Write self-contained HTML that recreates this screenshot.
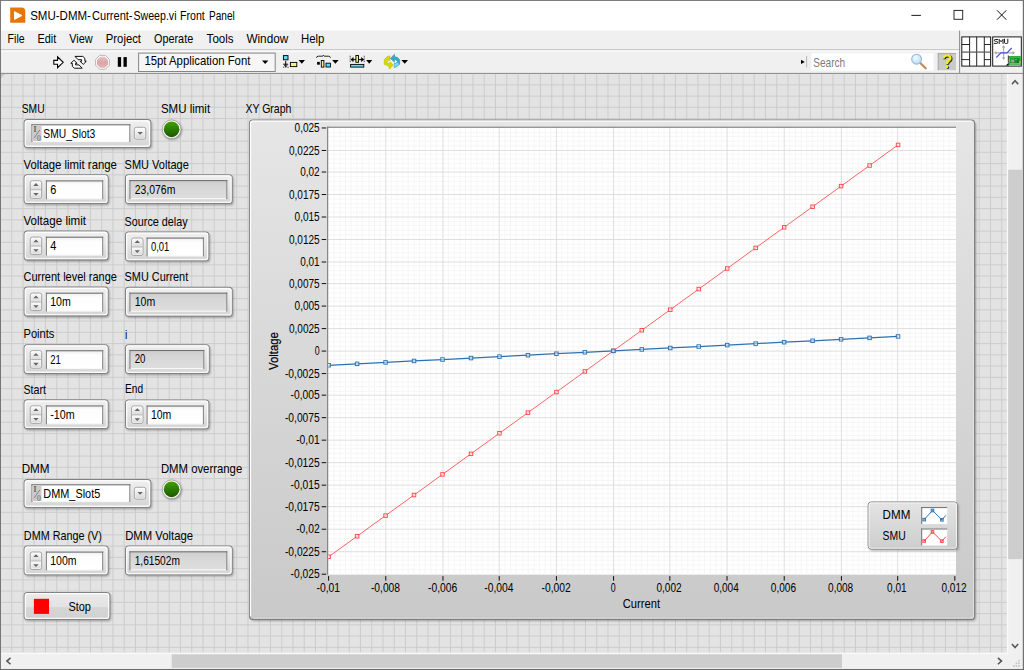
<!DOCTYPE html>
<html><head><meta charset="utf-8"><title>SMU-DMM-Current-Sweep.vi Front Panel</title>
<style>
html,body{margin:0;padding:0;background:#f0f0f0;overflow:hidden}
svg{display:block;font-family:"Liberation Sans",sans-serif}
text{white-space:pre}
</style></head><body>
<svg width="1024" height="670" viewBox="0 0 1024 670">
<defs>
<linearGradient id="gAbort" x1="0" y1="0" x2="0" y2="1"><stop offset="0" stop-color="#e9c3c3"/><stop offset="0.5" stop-color="#dca4a6"/><stop offset="1" stop-color="#e3b4b5"/></linearGradient>
<radialGradient id="gLens" cx="0.4" cy="0.35" r="0.7"><stop offset="0" stop-color="#f4fbff"/><stop offset="1" stop-color="#b6daf2"/></radialGradient>
<linearGradient id="gFrame" x1="0" y1="0" x2="0" y2="1"><stop offset="0" stop-color="#f0f0f0"/><stop offset="0.5" stop-color="#e4e4e4"/><stop offset="1" stop-color="#d4d4d4"/></linearGradient>
<linearGradient id="gField" x1="0" y1="0" x2="0" y2="1"><stop offset="0" stop-color="#eeeeee"/><stop offset="0.22" stop-color="#fdfdfd"/><stop offset="1" stop-color="#ffffff"/></linearGradient>
<linearGradient id="gInd" x1="0" y1="0" x2="0" y2="1"><stop offset="0" stop-color="#cdcdcd"/><stop offset="0.3" stop-color="#d6d6d6"/><stop offset="1" stop-color="#dedede"/></linearGradient>
<linearGradient id="gBtn" x1="0" y1="0" x2="0" y2="1"><stop offset="0" stop-color="#fcfcfc"/><stop offset="1" stop-color="#dadada"/></linearGradient>
<linearGradient id="gStop" x1="0" y1="0" x2="0" y2="1"><stop offset="0" stop-color="#ebebeb"/><stop offset="0.53" stop-color="#e3e3e3"/><stop offset="0.56" stop-color="#d6d6d6"/><stop offset="1" stop-color="#d1d1d1"/></linearGradient>
<linearGradient id="gLed" x1="0" y1="0" x2="0" y2="1"><stop offset="0" stop-color="#3fa300"/><stop offset="1" stop-color="#1b5800"/></linearGradient>
<filter id="fSh" x="-10%" y="-20%" width="125%" height="150%"><feGaussianBlur stdDeviation="0.9"/></filter>
<linearGradient id="gGraph" x1="0" y1="0" x2="0" y2="1"><stop offset="0" stop-color="#e6e6e6"/><stop offset="1" stop-color="#c9c9c9"/></linearGradient>
<linearGradient id="gLegend" x1="0" y1="0" x2="0" y2="1"><stop offset="0" stop-color="#e4e4e4"/><stop offset="1" stop-color="#cdcdcd"/></linearGradient>
<filter id="fShG" x="-5%" y="-5%" width="110%" height="112%"><feGaussianBlur stdDeviation="1.2"/></filter>
<clipPath id="cPlot"><rect x="328.2" y="127.7" width="627.8" height="446.9"/></clipPath>
</defs>
<rect x="0" y="0" width="1024" height="670" fill="#f0f0f0" />
<rect x="0" y="0" width="1024" height="30.6" fill="#ffffff" />
<path d="M10.2 7.5 H21.3 Q25.3 7.5 25.3 11.5 V22.7 H10.2 Z" fill="#e6760a"/>
<path d="M14.5 11.7 L22 15.5 L14.5 19.4 Z" fill="#ffffff" stroke="#ffffff" stroke-width="0.9" stroke-linejoin="round"/>
<text x="30.2" y="19.8" font-size="11.9" fill="#000" textLength="60.7" lengthAdjust="spacingAndGlyphs" >SMU-DMM-</text>
<text x="92.1" y="19.8" font-size="11.9" fill="#000" textLength="40.4" lengthAdjust="spacingAndGlyphs" >Current-</text>
<text x="133.5" y="19.8" font-size="11.9" fill="#000" textLength="43" lengthAdjust="spacingAndGlyphs" >Sweep.vi</text>
<text x="180" y="19.8" font-size="11.9" fill="#000" textLength="24.8" lengthAdjust="spacingAndGlyphs" >Front</text>
<text x="209" y="19.8" font-size="11.9" fill="#000" textLength="25.8" lengthAdjust="spacingAndGlyphs" >Panel</text>
<path d="M911.4 15.4 H920.9" stroke="#111" stroke-width="0.95" fill="none"/>
<rect x="954" y="10.4" width="8.7" height="8.9" fill="none" stroke="#222" stroke-width="0.95"/>
<path d="M997 10.3 L1006.3 19.7 M1006.3 10.3 L997 19.7" stroke="#111" stroke-width="1" fill="none"/>
<text x="7.6" y="42.7" font-size="12.1" fill="#000" textLength="17" lengthAdjust="spacingAndGlyphs" >File</text>
<text x="37.4" y="42.7" font-size="12.1" fill="#000" textLength="18.8" lengthAdjust="spacingAndGlyphs" >Edit</text>
<text x="69.2" y="42.7" font-size="12.1" fill="#000" textLength="23.4" lengthAdjust="spacingAndGlyphs" >View</text>
<text x="105.8" y="42.7" font-size="12.1" fill="#000" textLength="35.2" lengthAdjust="spacingAndGlyphs" >Project</text>
<text x="154" y="42.7" font-size="12.1" fill="#000" textLength="39.2" lengthAdjust="spacingAndGlyphs" >Operate</text>
<text x="206.6" y="42.7" font-size="12.1" fill="#000" textLength="27" lengthAdjust="spacingAndGlyphs" >Tools</text>
<text x="246.4" y="42.7" font-size="12.1" fill="#000" textLength="41.8" lengthAdjust="spacingAndGlyphs" >Window</text>
<text x="301" y="42.7" font-size="12.1" fill="#000" textLength="23.4" lengthAdjust="spacingAndGlyphs" >Help</text>
<rect x="0" y="49.25" width="959.2" height="1.05" fill="#bcbcbc" />
<rect x="0" y="50.3" width="959.2" height="1.4" fill="#fbfbfb" />
<path d="M53.8 60.4 H57.6 V56.9 L63.2 62.3 L57.6 67.7 V64.3 H53.8 Z" fill="#fff" stroke="#000" stroke-width="1.1" stroke-linejoin="miter"/>
<g fill="#fff" stroke="#000" stroke-width="0.95" stroke-linejoin="round"><path d="M75 56.4 H82.8 L84.9 58.4 V61.3 H86.3 L83.2 64.4 L80.2 61.3 H81.6 V59.7 H78.2 Z"/><path d="M82.2 68.2 H74.4 L72.3 66.2 V63.3 H70.9 L74 60.2 L77 63.3 H75.6 V64.9 H79 Z"/></g>
<polygon points="109.43 65.17 105.37 69.23 99.63 69.23 95.57 65.17 95.57 59.43 99.63 55.37 105.37 55.37 109.43 59.43" fill="#fafafa" stroke="#b9b9b9" stroke-width="1"/>
<polygon points="107.95 64.56 104.76 67.75 100.24 67.75 97.05 64.56 97.05 60.04 100.24 56.85 104.76 56.85 107.95 60.04" fill="url(#gAbort)"/>
<rect x="117.8" y="57.1" width="3.3" height="9.7" fill="#000" />
<rect x="123.5" y="57.1" width="3.3" height="9.7" fill="#000" />
<rect x="138.6" y="53.1" width="136.6" height="18.4" fill="#f6f6f6" stroke="#868686" stroke-width="1"/>
<text x="144.4" y="65.2" font-size="12.1" fill="#000" textLength="106" lengthAdjust="spacingAndGlyphs" >15pt Application Font</text>
<path d="M262 60.5 L268.4 60.5 L265.2 64 Z" fill="#000"/>
<rect x="283.4" y="55.6" width="4.6" height="4.2" fill="#5fdcf6" stroke="#000" stroke-width="0.9"/>
<path d="M285.7 60.8 V66.6 M283.2 64.2 H288.2 M284.3 65.2 L285.7 66.8 L287.1 65.2" stroke="#000" stroke-width="0.95" fill="none"/>
<path d="M283 67.2 H289" stroke="#000" stroke-width="0.8" stroke-dasharray="0.9 0.9"/>
<rect x="290.4" y="62.4" width="6.4" height="4.2" fill="#f6f282" stroke="#000" stroke-width="0.9"/>
<path d="M298.6 60.1 L305 60.1 L301.8 63.7 Z" fill="#000"/>
<path d="M316.4 57.8 Q316.6 56.2 318.4 56.2 H322 Q323.2 56.2 323.4 55.4 Q323.6 56.2 324.8 56.2 H328.4 Q330.2 56.2 330.4 57.8" stroke="#000" stroke-width="0.85" fill="none"/>
<rect x="317.1" y="61.9" width="2.7" height="2.8" fill="#000" />
<rect x="321.3" y="60.5" width="2.6" height="6.6" fill="#f6f282" stroke="#000" stroke-width="0.9"/>
<rect x="326" y="63.2" width="4.4" height="3.8" fill="#5fdcf6" stroke="#000" stroke-width="0.9"/>
<path d="M332.2 60.1 L338.6 60.1 L335.4 63.7 Z" fill="#000"/>
<path d="M350.2 55.8 V63 M364.2 55.8 V63" stroke="#000" stroke-width="0.9" stroke-dasharray="0.9 0.9"/>
<path d="M351 59.6 H363.6" stroke="#000" stroke-width="0.95"/>
<path d="M353.2 57.6 L351 59.6 L353.2 61.6 Z M361.4 57.6 L363.6 59.6 L361.4 61.6 Z" fill="#000" stroke="#000" stroke-width="0.6"/>
<rect x="355.9" y="55.5" width="2.6" height="6.8" fill="#f6f282" stroke="#000" stroke-width="0.9"/>
<rect x="350.6" y="64.4" width="13.2" height="2.7" fill="#5fdcf6" stroke="#000" stroke-width="0.9"/>
<path d="M366.2 60.1 L372.2 60.1 L369.2 63.7 Z" fill="#000"/>
<path d="M390 55.9 L387.2 56.5 L384.2 59.7 L384.2 64.3 L388.6 66.1 L389.5 69.2 L393.1 65 L390.2 61.8 L389.3 63.5 L386.8 62.5 L387.7 60.6 L390 60.3 Z" fill="#d8d800" stroke="#b4b400" stroke-width="0.5"/>
<path d="M390.4 58.4 L394.5 54.3 L394.5 56.6 L397.9 57.7 L399.7 59.9 L399.7 64.3 L396.8 66.5 L394.2 67.6 L394.2 63.6 L396.9 62 L396.9 61 L394.4 59.6 L394.4 62 Z" fill="#34acca" stroke="#1c7e9a" stroke-width="0.5"/>
<path d="M394.3 67.2 L394.3 64 L397.4 62.6 L399.3 64.2 L396.8 66.2 Z" fill="#74dcf2"/>
<path d="M395 59.9 L397.3 61.5 L395 63 Z" fill="#fbfbfb"/>
<path d="M401.4 60.1 L408 60.1 L404.7 63.8 Z" fill="#000"/>
<path d="M801 59.8 L804.8 61.9 L801 64 Z" fill="#000"/>
<rect x="806.2" y="55.8" width="0.9" height="11.6" fill="#b2b2b2" />
<rect x="811.4" y="53.2" width="122.2" height="17.5" fill="#ffffff" />
<text x="813.3" y="66.7" font-size="12.1" fill="#7c7c7c" textLength="31.8" lengthAdjust="spacingAndGlyphs" >Search</text>
<path d="M920.4 63 L925.8 68.2" stroke="#d08a48" stroke-width="2" stroke-linecap="round"/>
<path d="M920.6 64.4 L925.6 69" stroke="#9a9a9a" stroke-width="0.7" stroke-linecap="round"/>
<circle cx="916.6" cy="59.2" r="4.9" fill="url(#gLens)" stroke="#93bade" stroke-width="1.1"/>
<rect x="937.8" y="53.2" width="18.2" height="17" fill="#c9c9c9" />
<rect x="937.8" y="53.2" width="18.2" height="0.9" fill="#a5a5a5" />
<rect x="937.8" y="53.2" width="0.9" height="17" fill="#a5a5a5" />
<g transform="translate(0.8 0.7)"><path d="M943.7 58.5 Q943.8 55.5 947.3 55.5 Q950.5 55.5 950.5 58.2 Q950.5 59.9 948.6 61.1 Q947 62.2 947 64" fill="none" stroke="#1c1c1c" stroke-width="2.5"/><circle cx="947" cy="66.9" r="1.35" fill="#1c1c1c"/></g>
<path d="M943.7 58.5 Q943.8 55.5 947.3 55.5 Q950.5 55.5 950.5 58.2 Q950.5 59.9 948.6 61.1 Q947 62.2 947 64" fill="none" stroke="#f6f200" stroke-width="2.2"/><circle cx="947" cy="66.9" r="1.25" fill="#f6f200"/>
<rect x="0" y="72.9" width="1024" height="1" fill="#7d7d7d" />
<rect x="959.1" y="30.6" width="1" height="42.8" fill="#8a8a8a" />
<rect x="961.8" y="36.9" width="28.8" height="29.2" fill="#fff" stroke="#1a1a1a" stroke-width="1"/>
<path d="M969.6 36.9 V66.1 M976.7 36.9 V66.1 M984.3 36.9 V66.1" stroke="#1a1a1a" stroke-width="0.95"/>
<path d="M961.8 52.1 H990.6" stroke="#5c5c5c" stroke-width="1.25"/>
<path d="M961.8 44.5 H969.6 M984.3 44.5 H990.6 M961.8 59.6 H969.6 M984.3 59.6 H990.6" stroke="#1a1a1a" stroke-width="0.95"/>
<rect x="992.7" y="36.9" width="28.6" height="29.2" fill="#fff" stroke="#1a1a1a" stroke-width="1"/>
<g fill="none" stroke="#101010" stroke-width="0.95" stroke-linejoin="round" stroke-linecap="square"><path d="M997.6 39.5 H995.2 Q994.4 39.5 994.4 40.3 Q994.4 41.3 995.4 41.4 H996.7 Q997.7 41.5 997.7 42.5 Q997.7 43.4 996.8 43.4 H994.4"/><path d="M999.2 43.5 V39.4 L1001.1 41.8 L1003 39.4 V43.5"/><path d="M1004.5 39.3 V42.5 Q1004.5 43.4 1005.4 43.4 H1006.9 Q1007.8 43.4 1007.8 42.5 V39.3"/></g>
<path d="M1003.6 46.2 V58.9 M995 52.8 H1014" stroke="#adadad" stroke-width="1.15"/>
<path d="M1002.3 47.4 L1003.6 45.6 L1004.9 47.4 Z M1002.3 57.7 L1003.6 59.5 L1004.9 57.7 Z M996.2 51.5 L994.4 52.8 L996.2 54.1 Z M1012.8 51.5 L1014.6 52.8 L1012.8 54.1 Z" fill="#a4a4a4" stroke="#a4a4a4" stroke-width="0.5"/>
<path d="M996.3 57.5 L1000.9 52.9 H1007 L1011.7 48" stroke="#5252da" stroke-width="1.2" fill="none"/>
<rect x="1008.5" y="56.1" width="12.2" height="8.9" fill="#1f9a2e" />
<rect x="1009.6" y="56.6" width="10.6" height="1.6" fill="#35b840" />
<rect x="1014.6" y="58.4" width="4.4" height="4.6" fill="#178a26" />
<rect x="1015.4" y="59" width="1.2" height="1.2" fill="#52d85a" />
<rect x="1017.2" y="61.2" width="1.2" height="1.2" fill="#0c5c18" />
<rect x="1011" y="59.4" width="3.3" height="3.1" fill="#8c8c8c" />
<rect x="1011.6" y="60" width="2.1" height="1.9" fill="#a8a8a8" />
<rect x="1008.8" y="58.4" width="1.1" height="3.6" fill="#e0b040" />
<rect x="1019.2" y="60.9" width="1.3" height="2.5" fill="#e0b040" />
<rect x="1009.4" y="63.4" width="11" height="1.1" fill="#9ad49a" />
<path d="M1008.3 55.4 V62.4" stroke="#2c2c2c" stroke-width="0.9"/>
<path d="M1005.8 65.6 L1008.6 62.8 V65.6 Z" fill="#000"/>
<rect x="0.94" y="73.9" width="1005.96" height="578.9" fill="#e3e3e3" />
<path d="M11.72 73.9V652.8M22.97 73.9V652.8M34.22 73.9V652.8M45.47 73.9V652.8M56.72 73.9V652.8M67.97 73.9V652.8M79.22 73.9V652.8M90.47 73.9V652.8M101.72 73.9V652.8M112.97 73.9V652.8M124.22 73.9V652.8M135.47 73.9V652.8M146.72 73.9V652.8M157.97 73.9V652.8M169.22 73.9V652.8M180.47 73.9V652.8M191.72 73.9V652.8M202.97 73.9V652.8M214.22 73.9V652.8M225.47 73.9V652.8M236.72 73.9V652.8M247.97 73.9V652.8M259.22 73.9V652.8M270.47 73.9V652.8M281.72 73.9V652.8M292.97 73.9V652.8M304.22 73.9V652.8M315.47 73.9V652.8M326.72 73.9V652.8M337.97 73.9V652.8M349.22 73.9V652.8M360.47 73.9V652.8M371.72 73.9V652.8M382.97 73.9V652.8M394.22 73.9V652.8M405.47 73.9V652.8M416.72 73.9V652.8M427.97 73.9V652.8M439.22 73.9V652.8M450.47 73.9V652.8M461.72 73.9V652.8M472.97 73.9V652.8M484.22 73.9V652.8M495.47 73.9V652.8M506.72 73.9V652.8M517.97 73.9V652.8M529.22 73.9V652.8M540.47 73.9V652.8M551.72 73.9V652.8M562.97 73.9V652.8M574.22 73.9V652.8M585.47 73.9V652.8M596.72 73.9V652.8M607.97 73.9V652.8M619.22 73.9V652.8M630.47 73.9V652.8M641.72 73.9V652.8M652.97 73.9V652.8M664.22 73.9V652.8M675.47 73.9V652.8M686.72 73.9V652.8M697.97 73.9V652.8M709.22 73.9V652.8M720.47 73.9V652.8M731.72 73.9V652.8M742.97 73.9V652.8M754.22 73.9V652.8M765.47 73.9V652.8M776.72 73.9V652.8M787.97 73.9V652.8M799.22 73.9V652.8M810.47 73.9V652.8M821.72 73.9V652.8M832.97 73.9V652.8M844.22 73.9V652.8M855.47 73.9V652.8M866.72 73.9V652.8M877.97 73.9V652.8M889.22 73.9V652.8M900.47 73.9V652.8M911.72 73.9V652.8M922.97 73.9V652.8M934.22 73.9V652.8M945.47 73.9V652.8M956.72 73.9V652.8M967.97 73.9V652.8M979.22 73.9V652.8M990.47 73.9V652.8M1001.72 73.9V652.8M0.94 84.84H1006.9M0.94 96.09H1006.9M0.94 107.34H1006.9M0.94 118.59H1006.9M0.94 129.84H1006.9M0.94 141.09H1006.9M0.94 152.34H1006.9M0.94 163.59H1006.9M0.94 174.84H1006.9M0.94 186.09H1006.9M0.94 197.34H1006.9M0.94 208.59H1006.9M0.94 219.84H1006.9M0.94 231.09H1006.9M0.94 242.34H1006.9M0.94 253.59H1006.9M0.94 264.85H1006.9M0.94 276.1H1006.9M0.94 287.35H1006.9M0.94 298.6H1006.9M0.94 309.85H1006.9M0.94 321.1H1006.9M0.94 332.35H1006.9M0.94 343.6H1006.9M0.94 354.85H1006.9M0.94 366.1H1006.9M0.94 377.35H1006.9M0.94 388.6H1006.9M0.94 399.85H1006.9M0.94 411.1H1006.9M0.94 422.35H1006.9M0.94 433.6H1006.9M0.94 444.85H1006.9M0.94 456.1H1006.9M0.94 467.35H1006.9M0.94 478.6H1006.9M0.94 489.85H1006.9M0.94 501.1H1006.9M0.94 512.35H1006.9M0.94 523.6H1006.9M0.94 534.85H1006.9M0.94 546.1H1006.9M0.94 557.35H1006.9M0.94 568.6H1006.9M0.94 579.85H1006.9M0.94 591.1H1006.9M0.94 602.35H1006.9M0.94 613.6H1006.9M0.94 624.85H1006.9M0.94 636.1H1006.9M0.94 647.35H1006.9" stroke="#cbcbcb" stroke-width="0.94" fill="none"/>
<path d="M0.94 73.9 H5.2 L0.94 78.2 Z" fill="#c8c8c8"/>
<text x="21.7" y="113.2" font-size="12.4" fill="#000" textLength="22.9" lengthAdjust="spacingAndGlyphs" >SMU</text>
<rect x="24.95" y="120.8" width="127.2" height="28.4" rx="3.2" fill="#000" opacity="0.30" filter="url(#fSh)"/>
<rect x="24.15" y="119.6" width="126.6" height="27.8" rx="3.2" fill="url(#gFrame)" stroke="#828282" stroke-width="1.05"/>
<rect x="25.3" y="120.75" width="124.3" height="25.5" rx="2.2" fill="none" stroke="#fff" stroke-opacity="0.85" stroke-width="1.3"/>
<rect x="31.95" y="124.8" width="97.85" height="16.7" fill="#ffffff" />
<rect x="32.45" y="141" width="96.85" height="1.1" fill="#f8f8f8" />
<rect x="31.45" y="124.3" width="1" height="17.7" fill="#7c7c7c" />
<rect x="129.3" y="124.3" width="1" height="17.7" fill="#828282" />
<rect x="31.45" y="124.25" width="98.85" height="1.1" fill="#727272" />
<rect x="32.45" y="125.3" width="9.1" height="15.7" fill="#cacaca" />
<text x="33.45" y="132.4" font-size="7.6" fill="#606060" font-family="Liberation Serif" font-weight="bold">I</text>
<path d="M33.95 138.2 L39.75 130" stroke="#767676" stroke-width="0.85"/>
<text x="37.05" y="140.8" font-size="7.6" fill="#606060" font-family="Liberation Serif">0</text>
<text x="43.35" y="137.9" font-size="12.4" fill="#000" textLength="51.9" lengthAdjust="spacingAndGlyphs" >SMU_Slot3</text>
<rect x="134.3" y="127.3" width="11.5" height="11.8" rx="2.2" fill="#fff" stroke="#a0a0a0" stroke-width="0.95"/>
<rect x="135.2" y="128.2" width="9.7" height="10" rx="1.4" fill="url(#gBtn)"/>
<path d="M137.45 132 L142.85 132 L140.15 134.8 Z" fill="#666"/>
<text x="160.9" y="113.2" font-size="12.4" fill="#000" textLength="49.2" lengthAdjust="spacingAndGlyphs" >SMU limit</text>
<circle cx="172.3" cy="130.3" r="9.7" fill="#000" opacity="0.36" filter="url(#fSh)"/>
<circle cx="171.6" cy="129.3" r="9.3" fill="#fbfbfb" stroke="#9a9a9a" stroke-width="0.7"/>
<circle cx="171.6" cy="129.3" r="7.85" fill="url(#gLed)"/>
<text x="23.5" y="168.7" font-size="12.4" fill="#000" textLength="93.4" lengthAdjust="spacingAndGlyphs" >Voltage limit range</text>
<rect x="24.95" y="176" width="84.55" height="29.35" rx="3.2" fill="#000" opacity="0.30" filter="url(#fSh)"/>
<rect x="24.15" y="174.8" width="83.95" height="28.75" rx="3.2" fill="url(#gFrame)" stroke="#828282" stroke-width="1.05"/>
<rect x="25.3" y="175.95" width="81.65" height="26.45" rx="2.2" fill="none" stroke="#fff" stroke-opacity="0.85" stroke-width="1.3"/>
<rect x="30.25" y="180.8" width="11.4" height="17.5" rx="2" fill="#fff" stroke="#a0a0a0" stroke-width="0.95"/>
<rect x="31.15" y="181.7" width="9.6" height="7.65" rx="1.2" fill="url(#gBtn)"/>
<rect x="31.15" y="190.25" width="9.6" height="7.15" rx="1.2" fill="url(#gBtn)"/>
<path d="M30.75 189.75H41.15" stroke="#a6a6a6" stroke-width="0.9"/>
<path d="M33.25 185.9 L38.65 185.9 L35.95 183.1 Z" fill="#666"/>
<path d="M33.25 193 L38.65 193 L35.95 195.8 Z" fill="#666"/>
<rect x="46.4" y="180.9" width="56.3" height="17.8" fill="url(#gField)" />
<rect x="46.9" y="198.2" width="55.3" height="1.1" fill="#f8f8f8" />
<rect x="45.9" y="180.4" width="1" height="18.8" fill="#7c7c7c" />
<rect x="102.2" y="180.4" width="1" height="18.8" fill="#828282" />
<rect x="45.9" y="180.35" width="57.3" height="1.1" fill="#727272" />
<text x="50.2" y="193.9" font-size="12.4" fill="#000" textLength="6.1" lengthAdjust="spacingAndGlyphs" >6</text>
<text x="124.6" y="168.8" font-size="12.4" fill="#000" textLength="64.2" lengthAdjust="spacingAndGlyphs" >SMU Voltage</text>
<rect x="126.3" y="176" width="107.3" height="29.35" rx="3.2" fill="#000" opacity="0.30" filter="url(#fSh)"/>
<rect x="125.5" y="174.8" width="106.7" height="28.75" rx="3.2" fill="url(#gFrame)" stroke="#828282" stroke-width="1.05"/>
<rect x="126.65" y="175.95" width="104.4" height="26.45" rx="2.2" fill="none" stroke="#fff" stroke-opacity="0.85" stroke-width="1.3"/>
<rect x="129.9" y="180.6" width="96.9" height="18" fill="url(#gInd)" />
<rect x="130.4" y="198.1" width="95.9" height="1.1" fill="#f8f8f8" />
<rect x="129.4" y="180.1" width="1" height="19" fill="#7c7c7c" />
<rect x="226.3" y="180.1" width="1" height="19" fill="#828282" />
<rect x="129.4" y="180.05" width="97.9" height="1.1" fill="#727272" />
<text x="134.7" y="193.55" font-size="12.4" fill="#000" textLength="40.7" lengthAdjust="spacingAndGlyphs" >23,076m</text>
<text x="23.5" y="224.85" font-size="12.4" fill="#000" textLength="62.5" lengthAdjust="spacingAndGlyphs" >Voltage limit</text>
<rect x="24.95" y="232.3" width="84.55" height="29.35" rx="3.2" fill="#000" opacity="0.30" filter="url(#fSh)"/>
<rect x="24.15" y="231.1" width="83.95" height="28.75" rx="3.2" fill="url(#gFrame)" stroke="#828282" stroke-width="1.05"/>
<rect x="25.3" y="232.25" width="81.65" height="26.45" rx="2.2" fill="none" stroke="#fff" stroke-opacity="0.85" stroke-width="1.3"/>
<rect x="30.25" y="237.1" width="11.4" height="17.5" rx="2" fill="#fff" stroke="#a0a0a0" stroke-width="0.95"/>
<rect x="31.15" y="238" width="9.6" height="7.65" rx="1.2" fill="url(#gBtn)"/>
<rect x="31.15" y="246.55" width="9.6" height="7.15" rx="1.2" fill="url(#gBtn)"/>
<path d="M30.75 246.05H41.15" stroke="#a6a6a6" stroke-width="0.9"/>
<path d="M33.25 242.2 L38.65 242.2 L35.95 239.4 Z" fill="#666"/>
<path d="M33.25 249.3 L38.65 249.3 L35.95 252.1 Z" fill="#666"/>
<rect x="46.4" y="237.2" width="56.3" height="17.8" fill="url(#gField)" />
<rect x="46.9" y="254.5" width="55.3" height="1.1" fill="#f8f8f8" />
<rect x="45.9" y="236.7" width="1" height="18.8" fill="#7c7c7c" />
<rect x="102.2" y="236.7" width="1" height="18.8" fill="#828282" />
<rect x="45.9" y="236.65" width="57.3" height="1.1" fill="#727272" />
<text x="50.2" y="250.2" font-size="12.4" fill="#000" textLength="6.1" lengthAdjust="spacingAndGlyphs" >4</text>
<text x="124.6" y="225.7" font-size="12.4" fill="#000" textLength="63" lengthAdjust="spacingAndGlyphs" >Source delay</text>
<rect x="126.3" y="233.2" width="83.9" height="29.35" rx="3.2" fill="#000" opacity="0.30" filter="url(#fSh)"/>
<rect x="125.5" y="232" width="83.3" height="28.75" rx="3.2" fill="url(#gFrame)" stroke="#828282" stroke-width="1.05"/>
<rect x="126.65" y="233.15" width="81" height="26.45" rx="2.2" fill="none" stroke="#fff" stroke-opacity="0.85" stroke-width="1.3"/>
<rect x="131.6" y="238" width="11.4" height="17.5" rx="2" fill="#fff" stroke="#a0a0a0" stroke-width="0.95"/>
<rect x="132.5" y="238.9" width="9.6" height="7.65" rx="1.2" fill="url(#gBtn)"/>
<rect x="132.5" y="247.45" width="9.6" height="7.15" rx="1.2" fill="url(#gBtn)"/>
<path d="M132.1 246.95H142.5" stroke="#a6a6a6" stroke-width="0.9"/>
<path d="M134.6 243.1 L140 243.1 L137.3 240.3 Z" fill="#666"/>
<path d="M134.6 250.2 L140 250.2 L137.3 253 Z" fill="#666"/>
<rect x="147.1" y="238.1" width="56.3" height="17.8" fill="url(#gField)" />
<rect x="147.6" y="255.4" width="55.3" height="1.1" fill="#f8f8f8" />
<rect x="146.6" y="237.6" width="1" height="18.8" fill="#7c7c7c" />
<rect x="202.9" y="237.6" width="1" height="18.8" fill="#828282" />
<rect x="146.6" y="237.55" width="57.3" height="1.1" fill="#727272" />
<text x="150.9" y="251.1" font-size="12.4" fill="#000" textLength="18.4" lengthAdjust="spacingAndGlyphs" >0,01</text>
<text x="23.5" y="281.1" font-size="12.4" fill="#000" textLength="93.4" lengthAdjust="spacingAndGlyphs" >Current level range</text>
<rect x="24.95" y="288.3" width="84.55" height="29.35" rx="3.2" fill="#000" opacity="0.30" filter="url(#fSh)"/>
<rect x="24.15" y="287.1" width="83.95" height="28.75" rx="3.2" fill="url(#gFrame)" stroke="#828282" stroke-width="1.05"/>
<rect x="25.3" y="288.25" width="81.65" height="26.45" rx="2.2" fill="none" stroke="#fff" stroke-opacity="0.85" stroke-width="1.3"/>
<rect x="30.25" y="293.1" width="11.4" height="17.5" rx="2" fill="#fff" stroke="#a0a0a0" stroke-width="0.95"/>
<rect x="31.15" y="294" width="9.6" height="7.65" rx="1.2" fill="url(#gBtn)"/>
<rect x="31.15" y="302.55" width="9.6" height="7.15" rx="1.2" fill="url(#gBtn)"/>
<path d="M30.75 302.05H41.15" stroke="#a6a6a6" stroke-width="0.9"/>
<path d="M33.25 298.2 L38.65 298.2 L35.95 295.4 Z" fill="#666"/>
<path d="M33.25 305.3 L38.65 305.3 L35.95 308.1 Z" fill="#666"/>
<rect x="46.4" y="293.2" width="56.3" height="17.8" fill="url(#gField)" />
<rect x="46.9" y="310.5" width="55.3" height="1.1" fill="#f8f8f8" />
<rect x="45.9" y="292.7" width="1" height="18.8" fill="#7c7c7c" />
<rect x="102.2" y="292.7" width="1" height="18.8" fill="#828282" />
<rect x="45.9" y="292.65" width="57.3" height="1.1" fill="#727272" />
<text x="50.2" y="306.2" font-size="12.4" fill="#000" textLength="20.6" lengthAdjust="spacingAndGlyphs" >10m</text>
<text x="124.6" y="280.85" font-size="12.4" fill="#000" textLength="63.6" lengthAdjust="spacingAndGlyphs" >SMU Current</text>
<rect x="126.3" y="288.55" width="107.3" height="29.35" rx="3.2" fill="#000" opacity="0.30" filter="url(#fSh)"/>
<rect x="125.5" y="287.35" width="106.7" height="28.75" rx="3.2" fill="url(#gFrame)" stroke="#828282" stroke-width="1.05"/>
<rect x="126.65" y="288.5" width="104.4" height="26.45" rx="2.2" fill="none" stroke="#fff" stroke-opacity="0.85" stroke-width="1.3"/>
<rect x="129.9" y="293.15" width="96.9" height="18" fill="url(#gInd)" />
<rect x="130.4" y="310.65" width="95.9" height="1.1" fill="#f8f8f8" />
<rect x="129.4" y="292.65" width="1" height="19" fill="#7c7c7c" />
<rect x="226.3" y="292.65" width="1" height="19" fill="#828282" />
<rect x="129.4" y="292.6" width="97.9" height="1.1" fill="#727272" />
<text x="134.7" y="306.1" font-size="12.4" fill="#000" textLength="20.5" lengthAdjust="spacingAndGlyphs" >10m</text>
<text x="23.5" y="338.1" font-size="12.4" fill="#000" textLength="30.9" lengthAdjust="spacingAndGlyphs" >Points</text>
<rect x="24.95" y="345.85" width="84.55" height="29.35" rx="3.2" fill="#000" opacity="0.30" filter="url(#fSh)"/>
<rect x="24.15" y="344.65" width="83.95" height="28.75" rx="3.2" fill="url(#gFrame)" stroke="#828282" stroke-width="1.05"/>
<rect x="25.3" y="345.8" width="81.65" height="26.45" rx="2.2" fill="none" stroke="#fff" stroke-opacity="0.85" stroke-width="1.3"/>
<rect x="30.25" y="350.65" width="11.4" height="17.5" rx="2" fill="#fff" stroke="#a0a0a0" stroke-width="0.95"/>
<rect x="31.15" y="351.55" width="9.6" height="7.65" rx="1.2" fill="url(#gBtn)"/>
<rect x="31.15" y="360.1" width="9.6" height="7.15" rx="1.2" fill="url(#gBtn)"/>
<path d="M30.75 359.6H41.15" stroke="#a6a6a6" stroke-width="0.9"/>
<path d="M33.25 355.75 L38.65 355.75 L35.95 352.95 Z" fill="#666"/>
<path d="M33.25 362.85 L38.65 362.85 L35.95 365.65 Z" fill="#666"/>
<rect x="46.4" y="350.75" width="56.3" height="17.8" fill="url(#gField)" />
<rect x="46.9" y="368.05" width="55.3" height="1.1" fill="#f8f8f8" />
<rect x="45.9" y="350.25" width="1" height="18.8" fill="#7c7c7c" />
<rect x="102.2" y="350.25" width="1" height="18.8" fill="#828282" />
<rect x="45.9" y="350.2" width="57.3" height="1.1" fill="#727272" />
<text x="50.2" y="363.75" font-size="12.4" fill="#000" textLength="10.6" lengthAdjust="spacingAndGlyphs" >21</text>
<text x="125" y="338.85" font-size="12.4" fill="#000" textLength="2.3" lengthAdjust="spacingAndGlyphs" >i</text>
<rect x="126.3" y="345.9" width="84.3" height="29.35" rx="3.2" fill="#000" opacity="0.30" filter="url(#fSh)"/>
<rect x="125.5" y="344.7" width="83.7" height="28.75" rx="3.2" fill="url(#gFrame)" stroke="#828282" stroke-width="1.05"/>
<rect x="126.65" y="345.85" width="81.4" height="26.45" rx="2.2" fill="none" stroke="#fff" stroke-opacity="0.85" stroke-width="1.3"/>
<rect x="129.9" y="350.5" width="73.9" height="18" fill="url(#gInd)" />
<rect x="130.4" y="368" width="72.9" height="1.1" fill="#f8f8f8" />
<rect x="129.4" y="350" width="1" height="19" fill="#7c7c7c" />
<rect x="203.3" y="350" width="1" height="19" fill="#828282" />
<rect x="129.4" y="349.95" width="74.9" height="1.1" fill="#727272" />
<text x="134.7" y="363.45" font-size="12.4" fill="#000" textLength="10.7" lengthAdjust="spacingAndGlyphs" >20</text>
<text x="23.5" y="393.6" font-size="12.4" fill="#000" textLength="22.5" lengthAdjust="spacingAndGlyphs" >Start</text>
<rect x="24.95" y="401.05" width="84.55" height="29.35" rx="3.2" fill="#000" opacity="0.30" filter="url(#fSh)"/>
<rect x="24.15" y="399.85" width="83.95" height="28.75" rx="3.2" fill="url(#gFrame)" stroke="#828282" stroke-width="1.05"/>
<rect x="25.3" y="401" width="81.65" height="26.45" rx="2.2" fill="none" stroke="#fff" stroke-opacity="0.85" stroke-width="1.3"/>
<rect x="30.25" y="405.85" width="11.4" height="17.5" rx="2" fill="#fff" stroke="#a0a0a0" stroke-width="0.95"/>
<rect x="31.15" y="406.75" width="9.6" height="7.65" rx="1.2" fill="url(#gBtn)"/>
<rect x="31.15" y="415.3" width="9.6" height="7.15" rx="1.2" fill="url(#gBtn)"/>
<path d="M30.75 414.8H41.15" stroke="#a6a6a6" stroke-width="0.9"/>
<path d="M33.25 410.95 L38.65 410.95 L35.95 408.15 Z" fill="#666"/>
<path d="M33.25 418.05 L38.65 418.05 L35.95 420.85 Z" fill="#666"/>
<rect x="46.4" y="405.95" width="56.3" height="17.8" fill="url(#gField)" />
<rect x="46.9" y="423.25" width="55.3" height="1.1" fill="#f8f8f8" />
<rect x="45.9" y="405.45" width="1" height="18.8" fill="#7c7c7c" />
<rect x="102.2" y="405.45" width="1" height="18.8" fill="#828282" />
<rect x="45.9" y="405.4" width="57.3" height="1.1" fill="#727272" />
<text x="50.2" y="418.95" font-size="12.4" fill="#000" textLength="24.4" lengthAdjust="spacingAndGlyphs" >-10m</text>
<text x="125" y="393.4" font-size="12.4" fill="#000" textLength="18.1" lengthAdjust="spacingAndGlyphs" >End</text>
<rect x="126.3" y="401.15" width="83.9" height="29.35" rx="3.2" fill="#000" opacity="0.30" filter="url(#fSh)"/>
<rect x="125.5" y="399.95" width="83.3" height="28.75" rx="3.2" fill="url(#gFrame)" stroke="#828282" stroke-width="1.05"/>
<rect x="126.65" y="401.1" width="81" height="26.45" rx="2.2" fill="none" stroke="#fff" stroke-opacity="0.85" stroke-width="1.3"/>
<rect x="131.6" y="405.95" width="11.4" height="17.5" rx="2" fill="#fff" stroke="#a0a0a0" stroke-width="0.95"/>
<rect x="132.5" y="406.85" width="9.6" height="7.65" rx="1.2" fill="url(#gBtn)"/>
<rect x="132.5" y="415.4" width="9.6" height="7.15" rx="1.2" fill="url(#gBtn)"/>
<path d="M132.1 414.9H142.5" stroke="#a6a6a6" stroke-width="0.9"/>
<path d="M134.6 411.05 L140 411.05 L137.3 408.25 Z" fill="#666"/>
<path d="M134.6 418.15 L140 418.15 L137.3 420.95 Z" fill="#666"/>
<rect x="147.1" y="406.05" width="56.3" height="17.8" fill="url(#gField)" />
<rect x="147.6" y="423.35" width="55.3" height="1.1" fill="#f8f8f8" />
<rect x="146.6" y="405.55" width="1" height="18.8" fill="#7c7c7c" />
<rect x="202.9" y="405.55" width="1" height="18.8" fill="#828282" />
<rect x="146.6" y="405.5" width="57.3" height="1.1" fill="#727272" />
<text x="150.9" y="419.05" font-size="12.4" fill="#000" textLength="20.4" lengthAdjust="spacingAndGlyphs" >10m</text>
<text x="21.7" y="473.2" font-size="12.4" fill="#000" textLength="27.9" lengthAdjust="spacingAndGlyphs" >DMM</text>
<rect x="24.95" y="480.8" width="127.2" height="28.4" rx="3.2" fill="#000" opacity="0.30" filter="url(#fSh)"/>
<rect x="24.15" y="479.6" width="126.6" height="27.8" rx="3.2" fill="url(#gFrame)" stroke="#828282" stroke-width="1.05"/>
<rect x="25.3" y="480.75" width="124.3" height="25.5" rx="2.2" fill="none" stroke="#fff" stroke-opacity="0.85" stroke-width="1.3"/>
<rect x="31.95" y="484.8" width="97.85" height="16.7" fill="#ffffff" />
<rect x="32.45" y="501" width="96.85" height="1.1" fill="#f8f8f8" />
<rect x="31.45" y="484.3" width="1" height="17.7" fill="#7c7c7c" />
<rect x="129.3" y="484.3" width="1" height="17.7" fill="#828282" />
<rect x="31.45" y="484.25" width="98.85" height="1.1" fill="#727272" />
<rect x="32.45" y="485.3" width="9.1" height="15.7" fill="#cacaca" />
<text x="33.45" y="492.4" font-size="7.6" fill="#606060" font-family="Liberation Serif" font-weight="bold">I</text>
<path d="M33.95 498.2 L39.75 490" stroke="#767676" stroke-width="0.85"/>
<text x="37.05" y="500.8" font-size="7.6" fill="#606060" font-family="Liberation Serif">0</text>
<text x="43.35" y="497.9" font-size="12.4" fill="#000" textLength="56.9" lengthAdjust="spacingAndGlyphs" >DMM_Slot5</text>
<rect x="134.3" y="487.3" width="11.5" height="11.8" rx="2.2" fill="#fff" stroke="#a0a0a0" stroke-width="0.95"/>
<rect x="135.2" y="488.2" width="9.7" height="10" rx="1.4" fill="url(#gBtn)"/>
<path d="M137.45 492 L142.85 492 L140.15 494.8 Z" fill="#666"/>
<text x="160.9" y="473.2" font-size="12.4" fill="#000" textLength="81.3" lengthAdjust="spacingAndGlyphs" >DMM overrange</text>
<circle cx="172.3" cy="490.3" r="9.7" fill="#000" opacity="0.36" filter="url(#fSh)"/>
<circle cx="171.6" cy="489.3" r="9.3" fill="#fbfbfb" stroke="#9a9a9a" stroke-width="0.7"/>
<circle cx="171.6" cy="489.3" r="7.85" fill="url(#gLed)"/>
<text x="23.85" y="539.7" font-size="12.4" fill="#000" textLength="78.05" lengthAdjust="spacingAndGlyphs" >DMM Range (V)</text>
<rect x="24.95" y="547.2" width="84.55" height="29.35" rx="3.2" fill="#000" opacity="0.30" filter="url(#fSh)"/>
<rect x="24.15" y="546" width="83.95" height="28.75" rx="3.2" fill="url(#gFrame)" stroke="#828282" stroke-width="1.05"/>
<rect x="25.3" y="547.15" width="81.65" height="26.45" rx="2.2" fill="none" stroke="#fff" stroke-opacity="0.85" stroke-width="1.3"/>
<rect x="30.25" y="552" width="11.4" height="17.5" rx="2" fill="#fff" stroke="#a0a0a0" stroke-width="0.95"/>
<rect x="31.15" y="552.9" width="9.6" height="7.65" rx="1.2" fill="url(#gBtn)"/>
<rect x="31.15" y="561.45" width="9.6" height="7.15" rx="1.2" fill="url(#gBtn)"/>
<path d="M30.75 560.95H41.15" stroke="#a6a6a6" stroke-width="0.9"/>
<path d="M33.25 557.1 L38.65 557.1 L35.95 554.3 Z" fill="#666"/>
<path d="M33.25 564.2 L38.65 564.2 L35.95 567 Z" fill="#666"/>
<rect x="46.4" y="552.1" width="56.3" height="17.8" fill="url(#gField)" />
<rect x="46.9" y="569.4" width="55.3" height="1.1" fill="#f8f8f8" />
<rect x="45.9" y="551.6" width="1" height="18.8" fill="#7c7c7c" />
<rect x="102.2" y="551.6" width="1" height="18.8" fill="#828282" />
<rect x="45.9" y="551.55" width="57.3" height="1.1" fill="#727272" />
<text x="50.2" y="565.1" font-size="12.4" fill="#000" textLength="26.3" lengthAdjust="spacingAndGlyphs" >100m</text>
<text x="125.2" y="539.7" font-size="12.4" fill="#000" textLength="67.8" lengthAdjust="spacingAndGlyphs" >DMM Voltage</text>
<rect x="126.3" y="547.2" width="107.3" height="29.35" rx="3.2" fill="#000" opacity="0.30" filter="url(#fSh)"/>
<rect x="125.5" y="546" width="106.7" height="28.75" rx="3.2" fill="url(#gFrame)" stroke="#828282" stroke-width="1.05"/>
<rect x="126.65" y="547.15" width="104.4" height="26.45" rx="2.2" fill="none" stroke="#fff" stroke-opacity="0.85" stroke-width="1.3"/>
<rect x="129.9" y="551.8" width="96.9" height="18" fill="url(#gInd)" />
<rect x="130.4" y="569.3" width="95.9" height="1.1" fill="#f8f8f8" />
<rect x="129.4" y="551.3" width="1" height="19" fill="#7c7c7c" />
<rect x="226.3" y="551.3" width="1" height="19" fill="#828282" />
<rect x="129.4" y="551.25" width="97.9" height="1.1" fill="#727272" />
<text x="134.7" y="564.75" font-size="12.4" fill="#000" textLength="45.2" lengthAdjust="spacingAndGlyphs" >1,61502m</text>
<rect x="24.95" y="593.65" width="86.25" height="27.65" rx="3.2" fill="#000" opacity="0.30" filter="url(#fSh)"/>
<rect x="24.15" y="592.45" width="85.65" height="27.05" rx="3.2" fill="url(#gStop)" stroke="#828282" stroke-width="1.05"/>
<rect x="25.3" y="593.6" width="83.35" height="24.75" rx="2.2" fill="none" stroke="#fff" stroke-opacity="0.85" stroke-width="1.3"/>
<rect x="33.9" y="598.8" width="15.1" height="15.1" fill="#ff0000" />
<text x="68.4" y="610.7" font-size="12.4" fill="#000" textLength="22.6" lengthAdjust="spacingAndGlyphs" >Stop</text>
<text x="245.4" y="112.9" font-size="12.4" fill="#000" textLength="46" lengthAdjust="spacingAndGlyphs" >XY Graph</text>
<rect x="250.9" y="121.8" width="725.1" height="499.3" rx="3.5" fill="#000" opacity="0.3" filter="url(#fShG)"/>
<rect x="249.5" y="120" width="725.1" height="499.3" rx="3.4" fill="url(#gGraph)" stroke="#7e7e7e" stroke-width="1.15"/>
<path d="M250.5 616.3 V123.5 Q250.5 121 253 121 H971.6" stroke="#fff" stroke-opacity="0.95" stroke-width="1.25" fill="none"/>
<path d="M973.5 124 V615.8 Q973.5 618.2 971.1 618.2 H253.5" stroke="#e6e6e6" stroke-opacity="0.75" stroke-width="1.1" fill="none"/>
<rect x="327.2" y="126.7" width="628.8" height="447.9" fill="#ffffff" />
<path d="M334.22 127.7V574.6M339.84 127.7V574.6M345.47 127.7V574.6M351.09 127.7V574.6M356.72 127.7V574.6M362.34 127.7V574.6M368.91 127.7V574.6M374.53 127.7V574.6M380.16 127.7V574.6M391.41 127.7V574.6M397.03 127.7V574.6M402.66 127.7V574.6M408.28 127.7V574.6M413.91 127.7V574.6M419.53 127.7V574.6M425.16 127.7V574.6M430.78 127.7V574.6M436.41 127.7V574.6M448.59 127.7V574.6M454.22 127.7V574.6M459.84 127.7V574.6M465.47 127.7V574.6M471.09 127.7V574.6M476.72 127.7V574.6M482.34 127.7V574.6M487.97 127.7V574.6M493.59 127.7V574.6M504.84 127.7V574.6M510.47 127.7V574.6M516.09 127.7V574.6M522.66 127.7V574.6M528.28 127.7V574.6M533.91 127.7V574.6M539.53 127.7V574.6M545.16 127.7V574.6M550.78 127.7V574.6M562.03 127.7V574.6M567.66 127.7V574.6M573.28 127.7V574.6M578.91 127.7V574.6M584.53 127.7V574.6M590.16 127.7V574.6M595.78 127.7V574.6M602.34 127.7V574.6M607.97 127.7V574.6M619.22 127.7V574.6M624.84 127.7V574.6M630.47 127.7V574.6M636.09 127.7V574.6M641.72 127.7V574.6M647.34 127.7V574.6M652.97 127.7V574.6M658.59 127.7V574.6M664.22 127.7V574.6M676.41 127.7V574.6M682.03 127.7V574.6M687.66 127.7V574.6M693.28 127.7V574.6M698.91 127.7V574.6M704.53 127.7V574.6M710.16 127.7V574.6M715.78 127.7V574.6M721.41 127.7V574.6M732.66 127.7V574.6M738.28 127.7V574.6M743.91 127.7V574.6M749.53 127.7V574.6M756.09 127.7V574.6M761.72 127.7V574.6M767.34 127.7V574.6M772.97 127.7V574.6M778.59 127.7V574.6M789.84 127.7V574.6M795.47 127.7V574.6M801.09 127.7V574.6M806.72 127.7V574.6M812.34 127.7V574.6M817.97 127.7V574.6M823.59 127.7V574.6M830.16 127.7V574.6M835.78 127.7V574.6M847.03 127.7V574.6M852.66 127.7V574.6M858.28 127.7V574.6M863.91 127.7V574.6M869.53 127.7V574.6M875.16 127.7V574.6M880.78 127.7V574.6M886.41 127.7V574.6M892.03 127.7V574.6M903.28 127.7V574.6M909.84 127.7V574.6M915.47 127.7V574.6M921.09 127.7V574.6M926.72 127.7V574.6M932.34 127.7V574.6M937.97 127.7V574.6M943.59 127.7V574.6M949.22 127.7V574.6M328.2 132.66H956M328.2 136.41H956M328.2 141.09H956M328.2 145.78H956M328.2 154.22H956M328.2 158.91H956M328.2 163.59H956M328.2 168.28H956M328.2 176.72H956M328.2 181.41H956M328.2 186.09H956M328.2 189.84H956M328.2 199.22H956M328.2 203.91H956M328.2 207.66H956M328.2 212.34H956M328.2 221.72H956M328.2 225.47H956M328.2 230.16H956M328.2 234.84H956M328.2 244.22H956M328.2 247.97H956M328.2 252.66H956M328.2 257.34H956M328.2 265.78H956M328.2 270.47H956M328.2 275.16H956M328.2 279.84H956M328.2 288.28H956M328.2 292.97H956M328.2 297.66H956M328.2 301.41H956M328.2 310.78H956M328.2 315.47H956M328.2 319.22H956M328.2 323.91H956M328.2 333.28H956M328.2 337.03H956M328.2 341.72H956M328.2 346.41H956M328.2 355.78H956M328.2 359.53H956M328.2 364.22H956M328.2 368.91H956M328.2 377.34H956M328.2 382.03H956M328.2 386.72H956M328.2 391.41H956M328.2 399.84H956M328.2 404.53H956M328.2 409.22H956M328.2 412.97H956M328.2 422.34H956M328.2 427.03H956M328.2 430.78H956M328.2 435.47H956M328.2 444.84H956M328.2 448.59H956M328.2 453.28H956M328.2 457.97H956M328.2 466.41H956M328.2 471.09H956M328.2 475.78H956M328.2 480.47H956M328.2 488.91H956M328.2 493.59H956M328.2 498.28H956M328.2 502.97H956M328.2 511.41H956M328.2 516.09H956M328.2 520.78H956M328.2 524.53H956M328.2 533.91H956M328.2 538.59H956M328.2 542.34H956M328.2 547.03H956M328.2 556.41H956M328.2 560.16H956M328.2 564.84H956M328.2 569.53H956" stroke="#f5f5f5" stroke-width="0.94" fill="none"/>
<path d="M385.78 127.7V574.6M442.97 127.7V574.6M499.22 127.7V574.6M556.41 127.7V574.6M613.59 127.7V574.6M669.84 127.7V574.6M727.03 127.7V574.6M784.22 127.7V574.6M841.41 127.7V574.6M897.66 127.7V574.6M328.2 150.47H956M328.2 172.03H956M328.2 194.53H956M328.2 217.03H956M328.2 239.53H956M328.2 262.03H956M328.2 283.59H956M328.2 306.09H956M328.2 328.59H956M328.2 351.09H956M328.2 373.59H956M328.2 395.16H956M328.2 417.66H956M328.2 440.16H956M328.2 462.66H956M328.2 485.16H956M328.2 506.72H956M328.2 529.22H956M328.2 551.72H956" stroke="#dddddd" stroke-width="0.94" fill="none"/>
<rect x="327.2" y="126.7" width="628.8" height="1" fill="#6c6c6c" />
<rect x="327.2" y="126.7" width="1" height="447.9" fill="#6c6c6c" />
<path d="M321.7 127.97H326.2" stroke="#000" stroke-width="0.94"/>
<text x="294.6" y="132.17" font-size="12.2" fill="#000" textLength="25.1" lengthAdjust="spacingAndGlyphs" >0,025</text>
<path d="M321.7 150.47H326.2" stroke="#000" stroke-width="0.94"/>
<text x="289" y="154.67" font-size="12.2" fill="#000" textLength="30.7" lengthAdjust="spacingAndGlyphs" >0,0225</text>
<path d="M321.7 172.03H326.2" stroke="#000" stroke-width="0.94"/>
<text x="300.2" y="176.23" font-size="12.2" fill="#000" textLength="19.5" lengthAdjust="spacingAndGlyphs" >0,02</text>
<path d="M321.7 194.53H326.2" stroke="#000" stroke-width="0.94"/>
<text x="289" y="198.73" font-size="12.2" fill="#000" textLength="30.7" lengthAdjust="spacingAndGlyphs" >0,0175</text>
<path d="M321.7 217.03H326.2" stroke="#000" stroke-width="0.94"/>
<text x="294.6" y="221.23" font-size="12.2" fill="#000" textLength="25.1" lengthAdjust="spacingAndGlyphs" >0,015</text>
<path d="M321.7 239.53H326.2" stroke="#000" stroke-width="0.94"/>
<text x="289" y="243.73" font-size="12.2" fill="#000" textLength="30.7" lengthAdjust="spacingAndGlyphs" >0,0125</text>
<path d="M321.7 262.03H326.2" stroke="#000" stroke-width="0.94"/>
<text x="300.2" y="266.23" font-size="12.2" fill="#000" textLength="19.5" lengthAdjust="spacingAndGlyphs" >0,01</text>
<path d="M321.7 283.59H326.2" stroke="#000" stroke-width="0.94"/>
<text x="289" y="287.79" font-size="12.2" fill="#000" textLength="30.7" lengthAdjust="spacingAndGlyphs" >0,0075</text>
<path d="M321.7 306.09H326.2" stroke="#000" stroke-width="0.94"/>
<text x="294.6" y="310.29" font-size="12.2" fill="#000" textLength="25.1" lengthAdjust="spacingAndGlyphs" >0,005</text>
<path d="M321.7 328.59H326.2" stroke="#000" stroke-width="0.94"/>
<text x="289" y="332.79" font-size="12.2" fill="#000" textLength="30.7" lengthAdjust="spacingAndGlyphs" >0,0025</text>
<path d="M321.7 351.09H326.2" stroke="#000" stroke-width="0.94"/>
<text x="314.8" y="355.29" font-size="12.2" fill="#000" textLength="4.9" lengthAdjust="spacingAndGlyphs" >0</text>
<path d="M321.7 373.59H326.2" stroke="#000" stroke-width="0.94"/>
<text x="284.95" y="377.79" font-size="12.2" fill="#000" textLength="34.75" lengthAdjust="spacingAndGlyphs" >-0,0025</text>
<path d="M321.7 395.16H326.2" stroke="#000" stroke-width="0.94"/>
<text x="290.55" y="399.36" font-size="12.2" fill="#000" textLength="29.15" lengthAdjust="spacingAndGlyphs" >-0,005</text>
<path d="M321.7 417.66H326.2" stroke="#000" stroke-width="0.94"/>
<text x="284.95" y="421.86" font-size="12.2" fill="#000" textLength="34.75" lengthAdjust="spacingAndGlyphs" >-0,0075</text>
<path d="M321.7 440.16H326.2" stroke="#000" stroke-width="0.94"/>
<text x="296.15" y="444.36" font-size="12.2" fill="#000" textLength="23.55" lengthAdjust="spacingAndGlyphs" >-0,01</text>
<path d="M321.7 462.66H326.2" stroke="#000" stroke-width="0.94"/>
<text x="284.95" y="466.86" font-size="12.2" fill="#000" textLength="34.75" lengthAdjust="spacingAndGlyphs" >-0,0125</text>
<path d="M321.7 485.16H326.2" stroke="#000" stroke-width="0.94"/>
<text x="290.55" y="489.36" font-size="12.2" fill="#000" textLength="29.15" lengthAdjust="spacingAndGlyphs" >-0,015</text>
<path d="M321.7 506.72H326.2" stroke="#000" stroke-width="0.94"/>
<text x="284.95" y="510.92" font-size="12.2" fill="#000" textLength="34.75" lengthAdjust="spacingAndGlyphs" >-0,0175</text>
<path d="M321.7 529.22H326.2" stroke="#000" stroke-width="0.94"/>
<text x="296.15" y="533.42" font-size="12.2" fill="#000" textLength="23.55" lengthAdjust="spacingAndGlyphs" >-0,02</text>
<path d="M321.7 551.72H326.2" stroke="#000" stroke-width="0.94"/>
<text x="284.95" y="555.92" font-size="12.2" fill="#000" textLength="34.75" lengthAdjust="spacingAndGlyphs" >-0,0225</text>
<path d="M321.7 574.22H326.2" stroke="#000" stroke-width="0.94"/>
<text x="290.55" y="578.42" font-size="12.2" fill="#000" textLength="29.15" lengthAdjust="spacingAndGlyphs" >-0,025</text>
<path d="M328.59 576.1V580.7" stroke="#000" stroke-width="0.94"/>
<text x="316.52" y="591.6" font-size="12.2" fill="#000" textLength="23.55" lengthAdjust="spacingAndGlyphs" >-0,01</text>
<path d="M385.78 576.1V580.7" stroke="#000" stroke-width="0.94"/>
<text x="370.91" y="591.6" font-size="12.2" fill="#000" textLength="29.15" lengthAdjust="spacingAndGlyphs" >-0,008</text>
<path d="M442.97 576.1V580.7" stroke="#000" stroke-width="0.94"/>
<text x="428.09" y="591.6" font-size="12.2" fill="#000" textLength="29.15" lengthAdjust="spacingAndGlyphs" >-0,006</text>
<path d="M499.22 576.1V580.7" stroke="#000" stroke-width="0.94"/>
<text x="484.34" y="591.6" font-size="12.2" fill="#000" textLength="29.15" lengthAdjust="spacingAndGlyphs" >-0,004</text>
<path d="M556.41 576.1V580.7" stroke="#000" stroke-width="0.94"/>
<text x="541.53" y="591.6" font-size="12.2" fill="#000" textLength="29.15" lengthAdjust="spacingAndGlyphs" >-0,002</text>
<path d="M613.59 576.1V580.7" stroke="#000" stroke-width="0.94"/>
<text x="610.84" y="591.6" font-size="12.2" fill="#000" textLength="4.9" lengthAdjust="spacingAndGlyphs" >0</text>
<path d="M669.84 576.1V580.7" stroke="#000" stroke-width="0.94"/>
<text x="656.49" y="591.6" font-size="12.2" fill="#000" textLength="25.1" lengthAdjust="spacingAndGlyphs" >0,002</text>
<path d="M727.03 576.1V580.7" stroke="#000" stroke-width="0.94"/>
<text x="713.68" y="591.6" font-size="12.2" fill="#000" textLength="25.1" lengthAdjust="spacingAndGlyphs" >0,004</text>
<path d="M784.22 576.1V580.7" stroke="#000" stroke-width="0.94"/>
<text x="770.87" y="591.6" font-size="12.2" fill="#000" textLength="25.1" lengthAdjust="spacingAndGlyphs" >0,006</text>
<path d="M841.41 576.1V580.7" stroke="#000" stroke-width="0.94"/>
<text x="828.06" y="591.6" font-size="12.2" fill="#000" textLength="25.1" lengthAdjust="spacingAndGlyphs" >0,008</text>
<path d="M897.66 576.1V580.7" stroke="#000" stroke-width="0.94"/>
<text x="887.11" y="591.6" font-size="12.2" fill="#000" textLength="19.5" lengthAdjust="spacingAndGlyphs" >0,01</text>
<path d="M954.84 576.1V580.7" stroke="#000" stroke-width="0.94"/>
<text x="941.49" y="591.6" font-size="12.2" fill="#000" textLength="25.1" lengthAdjust="spacingAndGlyphs" >0,012</text>
<text x="622.8" y="607.8" font-size="12.4" fill="#000" textLength="37.2" lengthAdjust="spacingAndGlyphs" >Current</text>
<text transform="translate(277.6 369.9) rotate(-90)" x="0" y="0" font-size="12.4" textLength="37.7" lengthAdjust="spacingAndGlyphs" fill="#000" stroke="#000" stroke-width="0.2">Voltage</text>
<g clip-path="url(#cPlot)">
<polyline points="328.63,556.79 357.1,536.2 385.57,515.6 414.04,495.01 442.51,474.42 470.98,453.83 499.45,433.23 527.92,412.64 556.39,392.05 584.86,371.45 613.33,350.86 641.8,330.27 670.27,309.67 698.74,289.08 727.21,268.49 755.68,247.89 784.15,227.3 812.62,206.71 841.09,186.12 869.56,165.52 898.03,144.93" fill="none" stroke="#ff4848" stroke-width="0.85"/>
<rect x="326.88" y="555.04" width="3.5" height="3.5" fill="#fff" fill-opacity="0.55" stroke="#ff4848" stroke-width="0.95"/>
<rect x="355.35" y="534.45" width="3.5" height="3.5" fill="#fff" fill-opacity="0.55" stroke="#ff4848" stroke-width="0.95"/>
<rect x="383.82" y="513.85" width="3.5" height="3.5" fill="#fff" fill-opacity="0.55" stroke="#ff4848" stroke-width="0.95"/>
<rect x="412.29" y="493.26" width="3.5" height="3.5" fill="#fff" fill-opacity="0.55" stroke="#ff4848" stroke-width="0.95"/>
<rect x="440.76" y="472.67" width="3.5" height="3.5" fill="#fff" fill-opacity="0.55" stroke="#ff4848" stroke-width="0.95"/>
<rect x="469.23" y="452.08" width="3.5" height="3.5" fill="#fff" fill-opacity="0.55" stroke="#ff4848" stroke-width="0.95"/>
<rect x="497.7" y="431.48" width="3.5" height="3.5" fill="#fff" fill-opacity="0.55" stroke="#ff4848" stroke-width="0.95"/>
<rect x="526.17" y="410.89" width="3.5" height="3.5" fill="#fff" fill-opacity="0.55" stroke="#ff4848" stroke-width="0.95"/>
<rect x="554.64" y="390.3" width="3.5" height="3.5" fill="#fff" fill-opacity="0.55" stroke="#ff4848" stroke-width="0.95"/>
<rect x="583.11" y="369.7" width="3.5" height="3.5" fill="#fff" fill-opacity="0.55" stroke="#ff4848" stroke-width="0.95"/>
<rect x="611.58" y="349.11" width="3.5" height="3.5" fill="#fff" fill-opacity="0.55" stroke="#ff4848" stroke-width="0.95"/>
<rect x="640.05" y="328.52" width="3.5" height="3.5" fill="#fff" fill-opacity="0.55" stroke="#ff4848" stroke-width="0.95"/>
<rect x="668.52" y="307.92" width="3.5" height="3.5" fill="#fff" fill-opacity="0.55" stroke="#ff4848" stroke-width="0.95"/>
<rect x="696.99" y="287.33" width="3.5" height="3.5" fill="#fff" fill-opacity="0.55" stroke="#ff4848" stroke-width="0.95"/>
<rect x="725.46" y="266.74" width="3.5" height="3.5" fill="#fff" fill-opacity="0.55" stroke="#ff4848" stroke-width="0.95"/>
<rect x="753.93" y="246.14" width="3.5" height="3.5" fill="#fff" fill-opacity="0.55" stroke="#ff4848" stroke-width="0.95"/>
<rect x="782.4" y="225.55" width="3.5" height="3.5" fill="#fff" fill-opacity="0.55" stroke="#ff4848" stroke-width="0.95"/>
<rect x="810.87" y="204.96" width="3.5" height="3.5" fill="#fff" fill-opacity="0.55" stroke="#ff4848" stroke-width="0.95"/>
<rect x="839.34" y="184.37" width="3.5" height="3.5" fill="#fff" fill-opacity="0.55" stroke="#ff4848" stroke-width="0.95"/>
<rect x="867.81" y="163.77" width="3.5" height="3.5" fill="#fff" fill-opacity="0.55" stroke="#ff4848" stroke-width="0.95"/>
<rect x="896.28" y="143.18" width="3.5" height="3.5" fill="#fff" fill-opacity="0.55" stroke="#ff4848" stroke-width="0.95"/>
<polyline points="328.63,365.27 357.1,363.83 385.57,362.39 414.04,360.95 442.51,359.51 470.98,358.07 499.45,356.62 527.92,355.18 556.39,353.74 584.86,352.3 613.33,350.86 641.8,349.42 670.27,347.98 698.74,346.54 727.21,345.1 755.68,343.65 784.15,342.21 812.62,340.77 841.09,339.33 869.56,337.89 898.03,336.45" fill="none" stroke="#2c72b4" stroke-width="1.25"/>
<rect x="326.88" y="363.52" width="3.5" height="3.5" fill="#fff" fill-opacity="0.55" stroke="#2c72b4" stroke-width="0.95"/>
<rect x="355.35" y="362.08" width="3.5" height="3.5" fill="#fff" fill-opacity="0.55" stroke="#2c72b4" stroke-width="0.95"/>
<rect x="383.82" y="360.64" width="3.5" height="3.5" fill="#fff" fill-opacity="0.55" stroke="#2c72b4" stroke-width="0.95"/>
<rect x="412.29" y="359.2" width="3.5" height="3.5" fill="#fff" fill-opacity="0.55" stroke="#2c72b4" stroke-width="0.95"/>
<rect x="440.76" y="357.76" width="3.5" height="3.5" fill="#fff" fill-opacity="0.55" stroke="#2c72b4" stroke-width="0.95"/>
<rect x="469.23" y="356.32" width="3.5" height="3.5" fill="#fff" fill-opacity="0.55" stroke="#2c72b4" stroke-width="0.95"/>
<rect x="497.7" y="354.87" width="3.5" height="3.5" fill="#fff" fill-opacity="0.55" stroke="#2c72b4" stroke-width="0.95"/>
<rect x="526.17" y="353.43" width="3.5" height="3.5" fill="#fff" fill-opacity="0.55" stroke="#2c72b4" stroke-width="0.95"/>
<rect x="554.64" y="351.99" width="3.5" height="3.5" fill="#fff" fill-opacity="0.55" stroke="#2c72b4" stroke-width="0.95"/>
<rect x="583.11" y="350.55" width="3.5" height="3.5" fill="#fff" fill-opacity="0.55" stroke="#2c72b4" stroke-width="0.95"/>
<rect x="611.58" y="349.11" width="3.5" height="3.5" fill="#fff" fill-opacity="0.55" stroke="#2c72b4" stroke-width="0.95"/>
<rect x="640.05" y="347.67" width="3.5" height="3.5" fill="#fff" fill-opacity="0.55" stroke="#2c72b4" stroke-width="0.95"/>
<rect x="668.52" y="346.23" width="3.5" height="3.5" fill="#fff" fill-opacity="0.55" stroke="#2c72b4" stroke-width="0.95"/>
<rect x="696.99" y="344.79" width="3.5" height="3.5" fill="#fff" fill-opacity="0.55" stroke="#2c72b4" stroke-width="0.95"/>
<rect x="725.46" y="343.35" width="3.5" height="3.5" fill="#fff" fill-opacity="0.55" stroke="#2c72b4" stroke-width="0.95"/>
<rect x="753.93" y="341.9" width="3.5" height="3.5" fill="#fff" fill-opacity="0.55" stroke="#2c72b4" stroke-width="0.95"/>
<rect x="782.4" y="340.46" width="3.5" height="3.5" fill="#fff" fill-opacity="0.55" stroke="#2c72b4" stroke-width="0.95"/>
<rect x="810.87" y="339.02" width="3.5" height="3.5" fill="#fff" fill-opacity="0.55" stroke="#2c72b4" stroke-width="0.95"/>
<rect x="839.34" y="337.58" width="3.5" height="3.5" fill="#fff" fill-opacity="0.55" stroke="#2c72b4" stroke-width="0.95"/>
<rect x="867.81" y="336.14" width="3.5" height="3.5" fill="#fff" fill-opacity="0.55" stroke="#2c72b4" stroke-width="0.95"/>
<rect x="896.28" y="334.7" width="3.5" height="3.5" fill="#fff" fill-opacity="0.55" stroke="#2c72b4" stroke-width="0.95"/>
</g>
<rect x="869.3" y="503.5" width="89.4" height="47.3" rx="3.2" fill="#000" opacity="0.3" filter="url(#fSh)"/>
<rect x="868.1" y="501.9" width="89.4" height="47.3" rx="3.2" fill="url(#gLegend)" stroke="#8b8b8b" stroke-width="1"/>
<rect x="869.1" y="502.9" width="87.4" height="45.3" rx="2" fill="none" stroke="#fff" stroke-opacity="0.7" stroke-width="1"/>
<text x="882.6" y="518.8" font-size="12.4" fill="#000" textLength="27.7" lengthAdjust="spacingAndGlyphs" >DMM</text>
<text x="882.6" y="540.3" font-size="12.4" fill="#000" textLength="23.1" lengthAdjust="spacingAndGlyphs" >SMU</text>
<rect x="921.2" y="507.1" width="26" height="17" fill="#ffffff" />
<rect x="921.2" y="507.1" width="26" height="1" fill="#6c6c6c" />
<rect x="921.2" y="507.1" width="1" height="17" fill="#6c6c6c" />
<polyline points="924.2,519.6 932.5,510.5 941.9,519.8 945.9,515.3" fill="none" stroke="#2c72b4" stroke-width="1"/>
<rect x="922.9" y="518.3" width="2.6" height="2.6" fill="#2c72b4" fill-opacity="0.25" stroke="#2c72b4" stroke-width="0.95"/>
<rect x="931.2" y="509.2" width="2.6" height="2.6" fill="#2c72b4" fill-opacity="0.25" stroke="#2c72b4" stroke-width="0.95"/>
<rect x="940.6" y="518.5" width="2.6" height="2.6" fill="#2c72b4" fill-opacity="0.25" stroke="#2c72b4" stroke-width="0.95"/>
<rect x="921.2" y="528.5" width="26" height="17" fill="#ffffff" />
<rect x="921.2" y="528.5" width="26" height="1" fill="#6c6c6c" />
<rect x="921.2" y="528.5" width="1" height="17" fill="#6c6c6c" />
<polyline points="924.2,541 932.5,531.9 941.9,541.2 945.9,536.7" fill="none" stroke="#ff4848" stroke-width="1"/>
<rect x="922.9" y="539.7" width="2.6" height="2.6" fill="#ff4848" fill-opacity="0.25" stroke="#ff4848" stroke-width="0.95"/>
<rect x="931.2" y="530.6" width="2.6" height="2.6" fill="#ff4848" fill-opacity="0.25" stroke="#ff4848" stroke-width="0.95"/>
<rect x="940.6" y="539.9" width="2.6" height="2.6" fill="#ff4848" fill-opacity="0.25" stroke="#ff4848" stroke-width="0.95"/>
<rect x="1006.9" y="73.9" width="17.1" height="596.1" fill="#f0f0f0" />
<rect x="0" y="652.8" width="1024" height="17.2" fill="#f0f0f0" />
<rect x="1006.9" y="73.9" width="1.3" height="580.3" fill="#f9f9f9" />
<rect x="0.94" y="652.8" width="1007.26" height="1.4" fill="#f9f9f9" />
<rect x="1008.2" y="169.7" width="13.9" height="389.4" fill="#cdcdcd" />
<rect x="171.75" y="654.3" width="670.25" height="13.5" fill="#cdcdcd" />
<path d="M1011.9 84.3 L1015.05 80.7 L1018.2 84.3" stroke="#565656" stroke-width="1.55" fill="none"/>
<path d="M1011.9 643.9 L1015.05 647.5 L1018.2 643.9" stroke="#565656" stroke-width="1.55" fill="none"/>
<path d="M10.5 657.95 L6.9 661.1 L10.5 664.25" stroke="#565656" stroke-width="1.55" fill="none"/>
<path d="M997.9 657.95 L1001.5 661.1 L997.9 664.25" stroke="#565656" stroke-width="1.55" fill="none"/>
<rect x="1018.2" y="659.8" width="1.6" height="1.6" fill="#c3c3c3" />
<rect x="1015.6" y="662.5" width="1.6" height="1.6" fill="#c3c3c3" />
<rect x="1018.2" y="662.5" width="1.6" height="1.6" fill="#c3c3c3" />
<rect x="1013" y="665.2" width="1.6" height="1.6" fill="#c3c3c3" />
<rect x="1015.6" y="665.2" width="1.6" height="1.6" fill="#c3c3c3" />
<rect x="1018.2" y="665.2" width="1.6" height="1.6" fill="#c3c3c3" />
<rect x="0" y="668.1" width="1024" height="0.9" fill="#f7f7f7" />
<rect x="0" y="0" width="1024" height="0.9" fill="#6f6f6f" />
<rect x="0" y="0" width="0.94" height="670" fill="#6f6f6f" />
<rect x="1022.8" y="0" width="1.2" height="670" fill="#707070" />
<rect x="0" y="668.95" width="1024" height="1.05" fill="#6a6a6a" />
</svg>
</body></html>
